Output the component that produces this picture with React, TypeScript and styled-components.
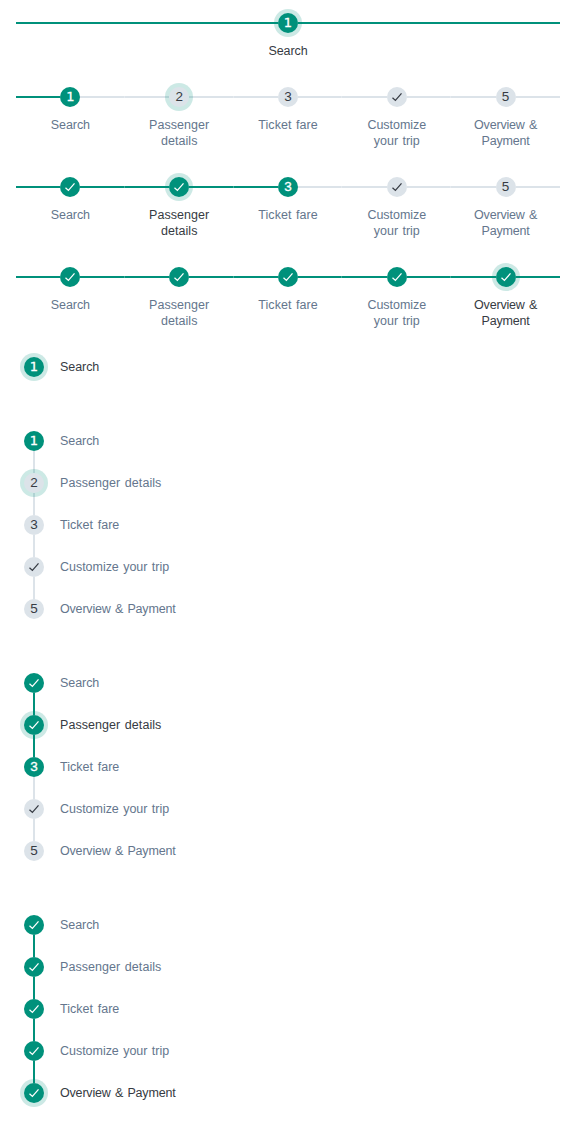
import React from "react";
import styled, { createGlobalStyle, css } from "styled-components";

const GREEN = "#00917b";
const GREY = "#dce3e9";
const INK = "#363b43";
const MUTED = "#64768d";

const GlobalStyle = createGlobalStyle`
  body {
    margin: 0;
    background: #fff;
    font-family: "Liberation Sans", Arial, sans-serif;
    font-size: 12.5px;
    line-height: 16px;
  }
`;

const Page = styled.main`
  box-sizing: border-box;
  min-height: 1144px;
  padding: 9px 16px 0;
`;

const HorizontalList = styled.ol`
  display: flex;
  margin: 0 0 24px;
  padding: 0;
  list-style: none;
`;

const HorizontalStep = styled.li`
  flex: 1 1 0;
  min-width: 0;
  display: flex;
  flex-direction: column;
  align-items: center;
  gap: 6px;
`;

const Track = styled.div`
  align-self: stretch;
  display: flex;
  align-items: center;
  height: 28px;
`;

const Line = styled.span<{ $done: boolean; $seam?: boolean }>`
  flex: 1;
  height: 2px;
  background: ${(p) => (p.$done ? GREEN : GREY)};
  ${(p) =>
    p.$seam &&
    css`
      background: linear-gradient(to left, rgba(255, 255, 255, 0.25) 1px, transparent 1px),
        ${p.$done ? GREEN : GREY};
    `}
`;

const Badge = styled.span<{ $done: boolean; $active: boolean }>`
  position: relative;
  flex: none;
  display: flex;
  align-items: center;
  justify-content: center;
  width: 20px;
  height: 20px;
  border-radius: 50%;
  background: ${(p) => (p.$done ? GREEN : GREY)};
  color: ${(p) => (p.$done ? "#fff" : INK)};
  box-shadow: ${(p) => (p.$active ? "0 0 0 4px rgba(0, 145, 123, 0.2)" : "none")};
`;

const Digit = styled.span<{ $footed: boolean; $strong: boolean }>`
  font-family: ${(p) => (p.$footed ? '"DejaVu Sans"' : '"Liberation Sans"')}, sans-serif;
  font-size: ${(p) => (p.$footed ? "13px" : "13.5px")};
  -webkit-text-stroke: ${(p) => (p.$strong ? "0.3px currentColor" : "0")};
`;

const Label = styled.span<{ $active: boolean; $tracking: number }>`
  color: ${(p) => (p.$active ? INK : MUTED)};
  letter-spacing: ${(p) => p.$tracking}px;
  word-spacing: 1px;
`;

const HorizontalLabel = styled(Label)`
  width: 76px;
  text-align: center;
`;

const VerticalLabel = styled(Label)`
  padding-top: 6px;
  white-space: nowrap;
`;

const VerticalList = styled.ol`
  margin: 0 0 32px;
  padding: 0;
  list-style: none;
`;

const VerticalStep = styled.li`
  display: flex;
  gap: 12px;
  height: 42px;
`;

const Rail = styled.div`
  display: flex;
  flex-direction: column;
  align-items: center;
  width: 28px;
  margin: 4px 0 -4px 4px;
`;

const RailLine = styled.span<{ $done: boolean }>`
  flex: 1;
  width: 2px;
  background: ${(p) => (p.$done ? GREEN : GREY)};
`;

const CheckIcon = () => (
  <svg width="12" height="12" viewBox="0 0 12 12" fill="none" aria-hidden="true">
    <path d="M1.5 6.7 4.4 9.4 10.5 2.4" stroke="currentColor" strokeWidth="1.25" />
  </svg>
);

const STEPS = [
  { label: "Search", tracking: -0.06 },
  { label: "Passenger details", tracking: 0.06 },
  { label: "Ticket fare", tracking: 0.04 },
  { label: "Customize your trip", tracking: -0.03 },
  { label: "Overview & Payment", tracking: -0.18 },
];

type Progress = { count: number; done: number; active: number; checked: number[] };

const STATES: Progress[] = [
  { count: 1, done: 1, active: 0, checked: [] },
  { count: 5, done: 1, active: 1, checked: [3] },
  { count: 5, done: 3, active: 1, checked: [0, 1, 3] },
  { count: 5, done: 5, active: 4, checked: [0, 1, 2, 3, 4] },
];

function StepBadge({ index, state }: { index: number; state: Progress }) {
  const done = index < state.done;
  return (
    <Badge $done={done} $active={index === state.active}>
      {state.checked.includes(index) ? (
        <CheckIcon />
      ) : (
        <Digit $footed={index === 0} $strong={done}>
          {index + 1}
        </Digit>
      )}
    </Badge>
  );
}

function HorizontalStepper({ state }: { state: Progress }) {
  return (
    <HorizontalList>
      {STEPS.slice(0, state.count).map((step, i) => (
        <HorizontalStep key={step.label}>
          <Track>
            <Line $done={i < state.done} />
            <StepBadge index={i} state={state} />
            <Line
              $done={i + 1 < state.done || state.done === state.count}
              $seam={i < state.count - 1}
            />
          </Track>
          <HorizontalLabel $active={i === state.active && i < state.done} $tracking={step.tracking}>
            {step.label}
          </HorizontalLabel>
        </HorizontalStep>
      ))}
    </HorizontalList>
  );
}

function VerticalStepper({ state }: { state: Progress }) {
  return (
    <VerticalList>
      {STEPS.slice(0, state.count).map((step, i) => (
        <VerticalStep key={step.label}>
          <Rail>
            <StepBadge index={i} state={state} />
            {i < state.count - 1 && <RailLine $done={i + 1 < state.done} />}
          </Rail>
          <VerticalLabel $active={i === state.active && i < state.done} $tracking={step.tracking}>
            {step.label}
          </VerticalLabel>
        </VerticalStep>
      ))}
    </VerticalList>
  );
}

export default function App() {
  return (
    <>
      <GlobalStyle />
      <Page>
        {STATES.map((state, i) => (
          <HorizontalStepper key={i} state={state} />
        ))}
        {STATES.map((state, i) => (
          <VerticalStepper key={i} state={state} />
        ))}
      </Page>
    </>
  );
}
